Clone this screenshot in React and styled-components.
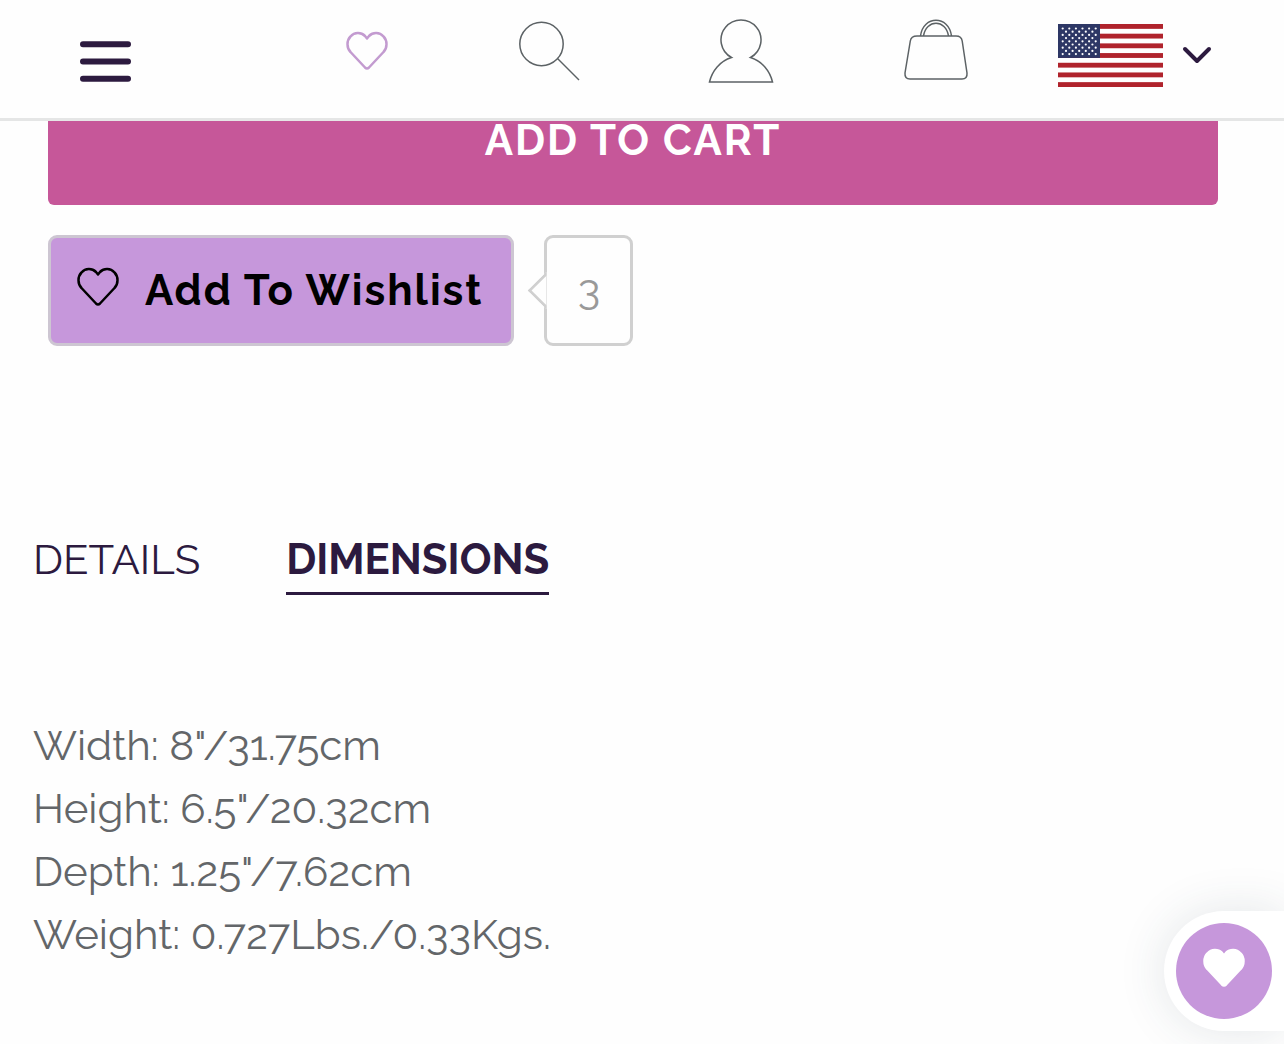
import React, { useState } from "react";
import styled, { createGlobalStyle } from "styled-components";

const GlobalStyle = createGlobalStyle`
  * { box-sizing: border-box; }
  body {
    margin: 0;
    background: #fefefe;
    color: #636669;
    font-family: Raleway, Lato, "Open Sans", sans-serif;
    font-size: 42px;
    line-height: 63px;
  }
  button { font: inherit; color: inherit; cursor: pointer; }
`;

const Header = styled.header`
  position: sticky;
  top: 0;
  z-index: 2;
  display: grid;
  grid-template-columns: 281fr 172fr 192fr 192fr 198fr 249fr;
  align-items: center;
  padding: 16px 0 30px;
  background: #fefefe;
  border-bottom: 3px solid #e5e6e6;
`;

const IconButton = styled.button`
  display: flex;
  align-items: center;
  justify-content: center;
  height: 72px;
  padding: 0;
  border: 0;
  background: none;
  svg { display: block; flex: none; }
`;

const MenuButton = styled(IconButton)`
  justify-content: flex-start;
  padding-left: 80px;
`;

const CountryButton = styled(IconButton)`
  justify-content: flex-start;
  gap: 18px;
  padding: 6px 0 0 23px;
`;

const Main = styled.main`
  margin-top: -48px;
`;

const Purchase = styled.section`
  display: flex;
  flex-direction: column;
  gap: 30px;
  padding: 0 66px 0 48px;
`;

const CartButton = styled.button`
  height: 132px;
  padding: 2px 0 0;
  border: 0;
  border-radius: 6px;
  background: #c65799;
  color: #fff;
  font-weight: 700;
  letter-spacing: 2px;
  text-transform: uppercase;
`;

const WishlistRow = styled.div`
  display: flex;
  gap: 30px;
`;

const WishlistButton = styled.button`
  display: flex;
  align-items: center;
  gap: 26px;
  height: 111px;
  padding: 0 28px 0 26px;
  border: 3px solid #cdc6d2;
  border-radius: 9px;
  background: #c697db;
  color: #000;
  font-weight: 700;
  letter-spacing: 2px;
  svg { margin-bottom: 8px; }
`;

const WishlistCount = styled.div`
  position: relative;
  display: flex;
  align-items: center;
  justify-content: center;
  width: 89px;
  height: 111px;
  padding-bottom: 2px;
  border: 3px solid #d0d0d0;
  border-radius: 9px;
  color: #999;
  &::before {
    content: "";
    position: absolute;
    left: -14px;
    top: 39px;
    width: 24px;
    height: 24px;
    border: solid #d0d0d0;
    border-width: 0 0 3px 3px;
    background: #fefefe;
    clip-path: polygon(0 0, 100% 100%, 0 100%);
    transform: rotate(45deg);
  }
`;

const Info = styled.section`
  padding: 182px 33px 0;
`;

const TabList = styled.div`
  display: flex;
  gap: 86px;
`;

const Tab = styled.button`
  padding: 0 0 1px;
  border: 0;
  border-bottom: 3px solid ${(p) => (p.$active ? "#2c1a3f" : "transparent")};
  background: none;
  color: #2c1a3f;
  font-weight: ${(p) => (p.$active ? 700 : 400)};
  text-transform: uppercase;
`;

const Specs = styled.ul`
  margin: 0;
  padding: 119px 0 78px;
  list-style: none;
`;

const FloatingTray = styled.aside`
  position: fixed;
  right: 0;
  bottom: 13px;
  z-index: 3;
  padding: 12px;
  border-radius: 60px 0 0 60px;
  background: #fff;
  box-shadow: 0 0 48px rgba(50, 70, 85, 0.13);
`;

const FloatingButton = styled.button`
  display: flex;
  align-items: center;
  justify-content: center;
  width: 96px;
  height: 96px;
  padding: 0 0 6px;
  border: 0;
  border-radius: 50%;
  background: #c697db;
`;

const HEART = "M21 37.5Q22 37.5 23 36.5L37.5 21C41.5 17 41.5 9.5 37.5 5.5C33.5 1 27 1 23 5L21 7.5L19 5C15 1 8.5 1 4.5 5.5C.5 9.5 .5 17 4.5 21L19 36.5Q20 37.5 21 37.5Z";

const Heart = ({ stroke, fill = "none" }) => (
  <svg width="42" height="40" viewBox="0 0 42 40" aria-hidden="true">
    <path d={HEART} fill={fill} stroke={stroke} strokeWidth="2.5" strokeLinejoin="round" />
  </svg>
);

const MenuIcon = () => (
  <svg width="52" height="72" viewBox="0 0 52 72" stroke="#2c1a3f" strokeWidth="6" strokeLinecap="round" aria-hidden="true">
    <path d="M3 28.2H48M3 45.5H48M3 62.7H48" />
  </svg>
);

const HeaderHeart = () => (
  <svg width="42" height="72" viewBox="0 -15 42 72" aria-hidden="true">
    <path d={HEART} fill="none" stroke="#c39bd0" strokeWidth="2.5" strokeLinejoin="round" />
  </svg>
);

const SearchIcon = () => (
  <svg width="64" height="72" viewBox="0 0 64 72" fill="none" stroke="#5c6265" strokeWidth="1.5" aria-hidden="true">
    <circle cx="24.5" cy="28" r="21.7" />
    <path d="M40.5 42.5L62 64" />
  </svg>
);

const UserIcon = () => (
  <svg width="66" height="72" viewBox="0 0 66 72" fill="none" stroke="#5c6265" strokeWidth="1.5" aria-hidden="true">
    <path d="M23.5 41.5A20 20 0 1 1 42.5 41.5C54 45 62 55 64.5 66H1.5C4 55 12 45 23.5 41.5Z" />
  </svg>
);

const BagIcon = () => (
  <svg width="66" height="72" viewBox="0 0 66 72" fill="none" stroke="#5c6265" strokeWidth="1.5" aria-hidden="true">
    <path d="M14 20H53Q58.5 20 59.2 25L64 57Q64.5 63 59 63H7Q1.5 63 2 57L7.3 25Q8 20 14 20Z" />
    <path d="M17.5 20C20 -1 46 -1 48.5 20M20.5 20C23 3 43 3 45.5 20" />
  </svg>
);

const STAR_ROWS = Array.from({ length: 9 }, (_, row) => row);

const FlagIcon = () => (
  <svg width="105" height="63" viewBox="0 0 105 63" aria-hidden="true">
    <rect width="105" height="63" fill="#fff" />
    {[0, 2, 4, 6, 8, 10, 12].map((i) => (
      <rect key={i} y={(i * 63) / 13} width="105" height={63 / 13} fill="#b0232c" />
    ))}
    <rect width="42" height={(63 * 7) / 13} fill="#2d3765" />
    {STAR_ROWS.flatMap((row) =>
      Array.from({ length: row % 2 ? 5 : 6 }, (_, col) => (
        <circle key={`${row}-${col}`} cx={4.7 + (row % 2) * 3.3 + col * 6.6} cy={4.5 + row * 3.2} r="1.1" fill="#fff" />
      ))
    )}
  </svg>
);

const ChevronIcon = () => (
  <svg width="32" height="24" viewBox="0 0 32 24" fill="none" stroke="#2c1a3f" strokeWidth="4" strokeLinecap="round" strokeLinejoin="round" aria-hidden="true">
    <path d="M4 6L16 18L28 6" />
  </svg>
);

const TABS = {
  Details: [],
  Dimensions: [
    'Width: 8"/31.75cm',
    'Height: 6.5"/20.32cm',
    'Depth: 1.25"/7.62cm',
    "Weight: 0.727Lbs./0.33Kgs.",
  ],
};

export default function App() {
  const [active, setActive] = useState("Dimensions");
  return (
    <>
      <GlobalStyle />
      <Header>
        <MenuButton aria-label="Menu"><MenuIcon /></MenuButton>
        <IconButton aria-label="Wishlist"><HeaderHeart /></IconButton>
        <IconButton aria-label="Search"><SearchIcon /></IconButton>
        <IconButton aria-label="Account"><UserIcon /></IconButton>
        <IconButton aria-label="Bag"><BagIcon /></IconButton>
        <CountryButton aria-label="Country"><FlagIcon /><ChevronIcon /></CountryButton>
      </Header>
      <Main>
        <Purchase>
          <CartButton>Add to cart</CartButton>
          <WishlistRow>
            <WishlistButton><Heart stroke="#000" />Add To Wishlist</WishlistButton>
            <WishlistCount>3</WishlistCount>
          </WishlistRow>
        </Purchase>
        <Info>
          <TabList role="tablist">
            {Object.keys(TABS).map((name) => (
              <Tab key={name} role="tab" aria-selected={name === active} $active={name === active} onClick={() => setActive(name)}>
                {name}
              </Tab>
            ))}
          </TabList>
          <Specs>
            {TABS[active].map((line) => <li key={line}>{line}</li>)}
          </Specs>
        </Info>
      </Main>
      <FloatingTray>
        <FloatingButton aria-label="Open wishlist"><Heart stroke="#fff" fill="#fff" /></FloatingButton>
      </FloatingTray>
    </>
  );
}
